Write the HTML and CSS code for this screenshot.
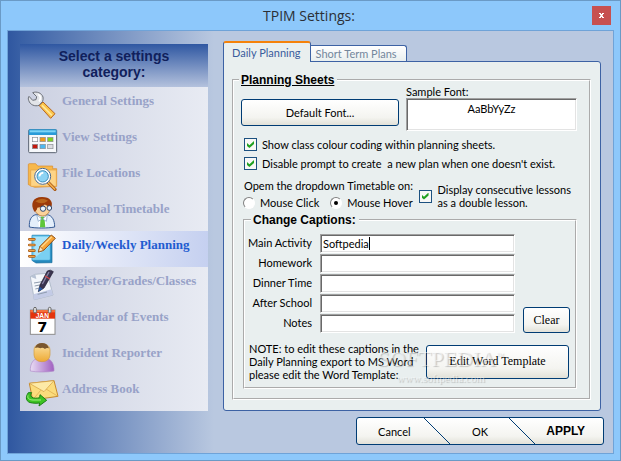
FILE: index.html
```html
<!DOCTYPE html>
<html lang="en">
<head>
  <meta charset="UTF-8">
  <meta name="viewport" content="width=device-width, initial-scale=1.0">
  <title>TPIM Settings</title>
  <link rel="stylesheet" href="styles.css">
</head>
<body>

  <div class="window">
    <header class="title-bar">
      <h1>TPIM Settings:</h1>
      <button type="button" class="close-btn" aria-label="Close">
        <svg width="5" height="5" viewBox="0 0 5 5"><path d="M0 0h2v1h1V0h2v1H4v1H3.500v1H4v1h1v1H3V4H2v1H0V4h1V3h.5V2H1V1H0z" fill="#fff"/></svg>
      </button>
    </header>

    <div class="client">
      <nav class="sidebar">
        <h2>Select a settings<br>category:</h2>

        <a href="#general" class="category">
          <svg class="icon" viewBox="0 0 90 90">
            <path d="M33 46l12-10 36 35-13 14z" fill="#fbc54a" stroke="#b8641c" stroke-width="3"/>
            <path d="M42 46l30 30" stroke="#ffe79a" stroke-width="5"/>
            <path d="M14 8c12-5 27 1 31 13 1 5 0 9-1 13l-11 12c-12 4-27-1-31-15-2-5-1-9 1-12l11 12 10-2 2-9z" fill="#e2e4e8" stroke="#6c7078" stroke-width="3"/>
            <path d="M31 13c8 6 8 14 2 21" fill="none" stroke="#fff" stroke-width="5"/>
          </svg>
          General Settings
        </a>
        <a href="#view" class="category">
          <svg class="icon" viewBox="0 0 90 90">
            <rect x="2" y="11" width="84" height="69" rx="3" fill="#f6f8fb" stroke="#596270" stroke-width="3"/>
            <path d="M2 14q0-4 4-4h76q4 0 4 4v13H2z" fill="#2a9bd8"/>
            <path d="M5 13h78v6H5z" fill="#7fd4f5"/>
            <g stroke="#8a8d92" stroke-width="2">
              <rect x="13" y="34" width="16" height="13" fill="#fff"/>
              <rect x="36" y="34" width="16" height="13" fill="#f09a1a"/>
              <rect x="59" y="34" width="16" height="13" fill="#7ed321"/>
              <rect x="13" y="55" width="16" height="13" fill="#c4170c"/>
              <rect x="36" y="55" width="16" height="13" fill="#4db8f0"/>
              <rect x="59" y="55" width="16" height="13" fill="#dcdde2"/>
            </g>
          </svg>
          View Settings
        </a>
        <a href="#files" class="category">
          <svg class="icon" viewBox="0 0 90 90">
            <path d="M1 8q0-3 3-3h19l6 7h45v8h12v53l-66 3L1 68z" fill="#f7b84b" stroke="#d98a26" stroke-width="2"/>
            <path d="M8 24h77v49H8z" fill="#fdd486" stroke="#e6a040" stroke-width="2"/>
            <path d="M61 62l20 20" stroke="#a85a18" stroke-width="10" stroke-linecap="round"/>
            <path d="M61 62l19 19" stroke="#f5b04a" stroke-width="5" stroke-linecap="round"/>
            <circle cx="44" cy="43" r="21" fill="#a9e0f7" stroke="#fff" stroke-width="8"/>
            <circle cx="44" cy="43" r="24" fill="none" stroke="#4a6788" stroke-width="3"/>
            <circle cx="44" cy="43" r="17" fill="#8cd3f4" stroke="#3c8cba" stroke-width="3"/>
            <path d="M34 43q2-10 12-11" fill="none" stroke="#fff" stroke-width="5"/>
          </svg>
          File Locations
        </a>
        <a href="#timetable" class="category">
          <svg class="icon" viewBox="0 0 90 90">
            <path d="M4 87c-1-20 5-34 20-37h34c15 3 22 17 22 37-20 4-58 4-76 0z" fill="#e4effb" stroke="#355a94" stroke-width="3"/>
            <path d="M28 50l14 12 14-12-3 37H33z" fill="#fff"/>
            <path d="M38 56h11l3 32H36z" fill="#5fc63a"/>
            <path d="M26 50l15 13-10 7zM58 50L44 63l11 7z" fill="#fff" stroke="#6f94bd" stroke-width="2"/>
            <path d="M20 20h46c3 20-8 34-22 34-15 0-27-14-24-34z" fill="#fbd29a" stroke="#a8641c" stroke-width="2"/>
            <path d="M19 41C6 18 14-3 42-3c25 0 34 15 28 30-10 2-14-6-20-8-6 10-16 9-22 10-1 6-4 10-9 12z" fill="#9c3a08"/>
            <path d="M22 10q18-14 38-2-18 14-38 2z" fill="#b9661c"/>
            <g fill="#e9f4fd" stroke="#34486c" stroke-width="3">
              <circle cx="45" cy="32" r="8"/>
              <circle cx="64" cy="30" r="7"/>
            </g>
          </svg>
          Personal Timetable
        </a>
        <a href="#planning" class="category active">
          <svg class="icon" viewBox="0 0 90 90">
            <path d="M13 4h50l9 6v76l-48 1-11-7z" fill="#2489bd" stroke="#1c6c9c" stroke-width="2"/>
            <path d="M12 4h51q4 0 4 4v67q0 4-4 4H12z" fill="#7ad0f2" stroke="#2a8fc4" stroke-width="2"/>
            <path d="M19 9h42v30L19 72z" fill="#aae4fa"/>
            <g fill="none" stroke="#a8560e" stroke-width="8" stroke-linecap="round">
              <path d="M4 16h15M4 33h15M4 50h15M4 67h15"/>
            </g>
            <g fill="none" stroke="#fbb65a" stroke-width="3" stroke-linecap="round">
              <path d="M4 16h15M4 33h15M4 50h15M4 67h15"/>
            </g>
            <path d="M31 54l5-17L70 3l12 10-35 36z" fill="#f7a53a" stroke="#8c4c10" stroke-width="3"/>
            <path d="M40 39L71 8" stroke="#ffd98c" stroke-width="4"/>
            <path d="M31 54l5-17 11 12z" fill="#fbe3bb" stroke="#8c4c10" stroke-width="2"/>
          </svg>
          Daily/Weekly Planning
        </a>
        <a href="#register" class="category">
          <svg class="icon" viewBox="0 0 90 90">
            <path d="M7 20l15-7 36-3 17 65-56 14z" fill="#f4f7fb" stroke="#9aa7b8" stroke-width="2"/>
            <path d="M18 89l57-14-5-17-54 15z" fill="#c3cbe6"/>
            <path d="M7 20l15-7 3 14z" fill="#b7c2d4"/>
            <path d="M18 39l24-4M20 48l20-4M22 57l12-3M29 73l28-7" stroke="#8f9cae" stroke-width="3"/>
            <path d="M31 65l5-20L58 3q9-6 18 2L48 54z" fill="#3b3550" stroke="#1e1a2c" stroke-width="2"/>
            <path d="M43 42L63 6" stroke="#8a86a6" stroke-width="4"/>
            <path d="M51 18l15 9" stroke="#d04848" stroke-width="4"/>
            <path d="M31 65l4-15 9 7z" fill="#2459a8"/>
          </svg>
          Register/Grades/Classes
        </a>
        <a href="#calendar" class="category">
          <svg class="icon" viewBox="0 0 90 90">
            <rect x="7" y="12" width="74" height="73" fill="#fff" stroke="#8c8c8c" stroke-width="3"/>
            <path d="M7 12h74v26H7z" fill="#e4340c"/>
            <path d="M7 12h74v7H7z" fill="#f4703c"/>
            <g fill="#e6e6e6" stroke="#666" stroke-width="3">
              <rect x="17" y="4" width="8" height="17" rx="4"/>
              <rect x="61" y="4" width="8" height="17" rx="4"/>
            </g>
            <text x="43" y="35" class="icon-month">JAN</text>
            <text x="43" y="77" class="icon-day">7</text>
          </svg>
          Calendar of Events
        </a>
        <a href="#incidents" class="category">
          <svg class="icon" viewBox="0 0 90 90">
            <defs>
              <linearGradient id="shirt"><stop offset="0" stop-color="#e8dcf4"/><stop offset="1" stop-color="#a05fc0"/></linearGradient>
              <linearGradient id="face" x2="0" y2="1"><stop offset="0" stop-color="#fbe0a0"/><stop offset="1" stop-color="#eeaa34"/></linearGradient>
            </defs>
            <path d="M7 87c-1-22 9-37 25-39h22c16 3 25 18 24 39-18 4-53 4-71 0z" fill="url(#shirt)" stroke="#b08cc8" stroke-width="2"/>
            <path d="M18 24q0-18 24-18t24 18v15q-2 20-24 20T18 39z" fill="url(#face)" stroke="#d09a3c" stroke-width="2"/>
            <path d="M21 18Q25 3 42 3q16 0 21 16-8-3-12 2-8-6-14-2-8-4-16-1z" fill="#79562f"/>
          </svg>
          Incident Reporter
        </a>
        <a href="#address" class="category">
          <svg class="icon" viewBox="0 0 90 90">
            <path d="M4 16l74-8 12 47-76 11z" fill="#fbdc7c" stroke="#c68a2c" stroke-width="3"/>
            <path d="M14 66l24-29M90 55L54 33" stroke="#d9a545" stroke-width="2"/>
            <path d="M4 16l44 25L78 8z" fill="#fdeaa6" stroke="#d09a3c" stroke-width="2"/>
            <path d="M1 44c-10 14-8 29 12 31 7 1 15 1 22 0l-2 9 23-17-20-17-1 9c-9 2-19 3-24-2-4-4-3-9 0-13z" fill="#3dc423" stroke="#1a7f12" stroke-width="3"/>
            <path d="M0 52c-3 10 6 14 15 14h24" fill="none" stroke="#a0ee80" stroke-width="3"/>
          </svg>
          Address Book
        </a>
      </nav>

      <main class="content">
        <div class="tabs" role="tablist">
          <button type="button" class="tab active" role="tab" aria-selected="true">Daily Planning</button>
          <button type="button" class="tab" role="tab" aria-selected="false">Short Term Plans</button>
        </div>

        <div class="panel" role="tabpanel">
          <fieldset class="group">
            <legend class="underlined">Planning Sheets</legend>

            <div class="font-row">
              <button type="button" class="btn font-btn">Default Font...</button>
              <div class="sample">
                <span>Sample Font:</span>
                <div class="sample-box">AaBbYyZz</div>
              </div>
            </div>

            <div class="options">
              <label class="option"><input type="checkbox" checked> Show class colour coding within planning sheets.</label>
              <label class="option"><input type="checkbox" checked> Disable prompt to create &nbsp;a new plan when one doesn't exist.</label>
            </div>

            <div class="open-row">
              <div class="open-mode">
                <div class="open-title">Opem the dropdown Timetable on:</div>
                <div class="radios">
                  <label class="option"><input type="radio" name="open-mode"> Mouse Click</label>
                  <label class="option"><input type="radio" name="open-mode" checked> Mouse Hover</label>
                </div>
              </div>
              <label class="option double"><input type="checkbox" checked> <span>Display consecutive lessons<br>as a double lesson.</span></label>
            </div>

            <fieldset class="group captions">
              <legend>Change Captions:</legend>
              <div class="caption-grid">
                <label for="main-activity">Main Activity</label>
                <div class="focused">
                  <input type="text" id="main-activity" value="Softpedia">
                  <span class="caret"></span>
                </div>
                <label for="homework">Homework</label>
                <input type="text" id="homework">
                <label for="dinner">Dinner Time</label>
                <input type="text" id="dinner">
                <label for="after-school">After School</label>
                <input type="text" id="after-school">
                <label for="notes">Notes</label>
                <input type="text" id="notes">
                <button type="button" class="btn serif clear-btn">Clear</button>
              </div>
              <div class="note-row">
                <p>NOTE: to edit these captions in the<br>Daily Planning export to MS Word<br>please edit the Word Template:</p>
                <button type="button" class="btn serif">Edit Word Template</button>
              </div>
              <div class="watermark">
                <span class="mark-name">SOFTPEDIA<sup>™</sup></span>
                <span class="mark-url">www.softpedia.com</span>
              </div>
            </fieldset>
          </fieldset>
        </div>

        <div class="actions">
          <button type="button" class="cancel">Cancel</button>
          <svg class="slash" width="27" height="26" viewBox="0 0 27 26"><path d="M0 0l26 26" stroke="#003c74"/></svg>
          <button type="button" class="ok">OK</button>
          <svg class="slash" width="27" height="26" viewBox="0 0 27 26"><path d="M0 0l26 26" stroke="#003c74"/></svg>
          <button type="button" class="apply">APPLY</button>
        </div>
      </main>
    </div>
  </div>

</body>
</html>
```

FILE: styles.css
```css
* {
  box-sizing: border-box;
}
body {
  margin: 0;
  font-family: Lato, "Liberation Sans", sans-serif;
  font-size: 11px;
  line-height: 13px;
  color: #000;
}
button,
input {
  font: inherit;
  color: inherit;
}
.window {
  display: flex;
  flex-direction: column;
  min-height: 100vh;
  padding: 0 6px 6px;
  border: 1px solid #6a9ac6;
  background-color: #8dc8fb;
}

/* title bar */
.title-bar {
  display: flex;
  align-items: center;
  height: 29px;
}
.title-bar h1 {
  flex: 1;
  margin: 0;
  padding-left: 19px;
  font-family: "Open Sans", "Noto Sans", sans-serif;
  font-size: 14px;
  font-weight: normal;
  text-align: center;
  color: #2b2f36;
}
.close-btn {
  display: flex;
  align-items: center;
  justify-content: center;
  width: 19px;
  height: 19px;
  margin-right: 3px;
  padding: 0;
  border: none;
  background-color: #c75050;
}

.client {
  flex: 1;
  display: flex;
  gap: 15px;
  padding: 10px 9px 7px 12px;
  border: 1px solid #6fa3d8;
  background: linear-gradient(to right, #2f57a0, #3a61a6 14px, #b9c8e0 206px);
}

/* sidebar */
.sidebar {
  flex: none;
  align-self: flex-start;
  width: 188px;
  margin-top: 3px;
  background: linear-gradient(to right, #cbd0e1, #e8ebf3);
}
.sidebar h2 {
  height: 43px;
  margin: 0;
  padding-top: 4px;
  background: linear-gradient(#2f57a2, #b4c2dd);
  font-family: "Liberation Sans", sans-serif;
  font-size: 14px;
  line-height: 16px;
  text-align: center;
  color: #10205c;
}
.category {
  display: flex;
  gap: 4px;
  height: 36px;
  padding: 3px 0 3px 8px;
  font-family: "Liberation Serif", serif;
  font-size: 13px;
  font-weight: bold;
  line-height: 22px;
  white-space: nowrap;
  text-decoration: none;
  color: #98a2c8;
}
.category.active {
  background: linear-gradient(to right, #fff, #c5d0f0);
  color: #1f5cd0;
}
.icon {
  flex: none;
  width: 30px;
  height: 30px;
  overflow: visible;
}
.icon-month {
  font: bold 20px "Liberation Sans", sans-serif;
  text-anchor: middle;
  fill: #fff;
}
.icon-day {
  font: bold 44px "DejaVu Sans", sans-serif;
  text-anchor: middle;
  fill: #000;
}

/* tabs */
.content {
  flex: 1;
  min-width: 0;
  display: flex;
  flex-direction: column;
}
.tabs {
  display: flex;
  align-items: flex-end;
  height: 20px;
}
.tab {
  height: 16px;
  padding: 0 9px 0 5px;
  border: 1px solid #3d62a4;
  border-left: none;
  border-bottom: none;
  border-radius: 0 3px 0 0;
  background: linear-gradient(#fff, #e9efef);
  color: #73879c;
}
.tab.active {
  z-index: 1;
  height: 21px;
  margin-bottom: -1px;
  padding: 0 9px 0 8px;
  border-top: 2px solid #f5820a;
  border-left: 1px solid #3d62a4;
  border-radius: 3px 3px 0 0;
  background: #e9efef;
  color: #3a5c9c;
}
.panel {
  margin-right: 3px;
  padding: 12px 9px 10px 8px;
  border: 1px solid #3d62a4;
  border-radius: 0 3px 3px 3px;
  background-color: #e9efef;
}

/* group boxes */
.group {
  min-width: 0;
  margin: 0;
  padding: 0 12px 9px 7px;
  border: 2px groove #fff;
}
.group legend {
  margin-left: -2px;
  padding: 0 3px 0 2px;
  font-family: "Liberation Sans", sans-serif;
  font-size: 12px;
  font-weight: bold;
  line-height: 12px;
}
.group legend.underlined {
  text-decoration: underline;
}

.btn {
  padding: 0;
  border: 1px solid #003c74;
  border-radius: 3px;
  background: linear-gradient(#fff, #f4f4f0 70%, #e2e1d8);
}
.btn.serif {
  font-family: "Liberation Serif", serif;
  font-size: 12px;
}
.font-row {
  display: flex;
  gap: 7px;
}
.font-btn {
  width: 158px;
  height: 27px;
  margin-top: 13px;
}
.sample {
  flex: 1;
  line-height: 12px;
}
.sample-box,
input[type="text"] {
  border: 1px solid;
  border-color: #a0a0a0 #fff #fff #a0a0a0;
  background-color: #fff;
  box-shadow: inset 1px 1px #696969, inset -1px -1px #e3e3e3;
}
.sample-box {
  height: 33px;
  padding-top: 4px;
  text-align: center;
}

/* check boxes and radios */
.options {
  margin-top: 4px;
  padding-left: 3px;
}
.option {
  display: flex;
  align-items: center;
  gap: 5px;
  min-height: 19px;
  white-space: nowrap;
}
.option input {
  appearance: none;
  flex: none;
  display: grid;
  place-content: center;
  width: 13px;
  height: 13px;
  margin: 0;
  border: 1px solid #1c5180;
  background-color: #f8f8f6;
}
.option input[type="checkbox"]:checked::after {
  content: "";
  width: 7px;
  height: 7px;
  background-color: #21a121;
  clip-path: polygon(0 30%, 35% 62%, 100% 0, 100% 42%, 35% 100%, 0 70%);
}
.option input[type="radio"] {
  width: 12px;
  height: 12px;
  border-color: #808080 #fff #fff #808080;
  border-radius: 50%;
  background-color: #fff;
}
.option input[type="radio"]:checked::after {
  content: "";
  width: 4px;
  height: 4px;
  border-radius: 50%;
  background-color: #000;
}
.open-row {
  display: flex;
  justify-content: space-between;
  margin-top: 4px;
  padding-left: 2px;
}
.open-title {
  padding-left: 1px;
  line-height: 17px;
}
.radios {
  display: flex;
  gap: 11px;
}
.radios .option {
  min-height: 17px;
}
.double {
  gap: 6px;
  padding: 4px 6px 0 0;
}

/* captions */
.captions {
  position: relative;
  margin: 3px 0 0 2px;
  padding: 8px 5px 6px 0;
}
.captions legend {
  margin-left: 6px;
}
.caption-grid {
  display: grid;
  grid-template-columns: 67px 1fr 47px;
  grid-auto-rows: 19px;
  gap: 1px 8px;
}
.caption-grid label {
  grid-column: 1;
  line-height: 18px;
  text-align: right;
  white-space: nowrap;
}
.caption-grid input {
  width: 100%;
  height: 19px;
  padding: 0 2px;
}
.focused {
  position: relative;
}
.caret {
  position: absolute;
  top: 3px;
  left: 49px;
  width: 1px;
  height: 13px;
  background-color: #000;
}
.clear-btn {
  grid-column: 3;
  grid-row: 4 / 6;
  align-self: end;
  height: 26px;
}
.note-row {
  display: flex;
  justify-content: space-between;
  align-items: center;
  margin-top: 9px;
  padding: 0 1px 0 4px;
}
.note-row p {
  margin: 0;
  white-space: nowrap;
}
.note-row .btn {
  width: 143px;
  height: 34px;
}
.watermark {
  position: absolute;
  right: 71px;
  bottom: 2px;
  display: flex;
  flex-direction: column;
  align-items: center;
  font-family: "Liberation Serif", serif;
  color: rgba(255, 255, 255, 0.5);
  text-shadow: 1px 1px 1px rgba(0, 0, 0, 0.2);
  pointer-events: none;
}
.mark-name {
  font-size: 22px;
  line-height: 26px;
}
.mark-name sup {
  font-size: 8px;
}
.mark-url {
  font-size: 11px;
}

/* bottom buttons */
.actions {
  display: flex;
  align-self: flex-end;
  width: 248px;
  height: 28px;
  margin-top: 6px;
  border: 1px solid #003c74;
  border-radius: 3px;
  background: linear-gradient(#fff, #f4f4f0 70%, #e2e1d8);
}
.actions button {
  flex: 1;
  padding: 0;
  border: none;
  background: none;
}
.actions .cancel {
  padding-left: 8px;
}
.actions .apply {
  padding-right: 8px;
  font-family: "Liberation Sans", sans-serif;
  font-size: 12px;
  font-weight: bold;
}
.slash {
  flex: none;
}
```
